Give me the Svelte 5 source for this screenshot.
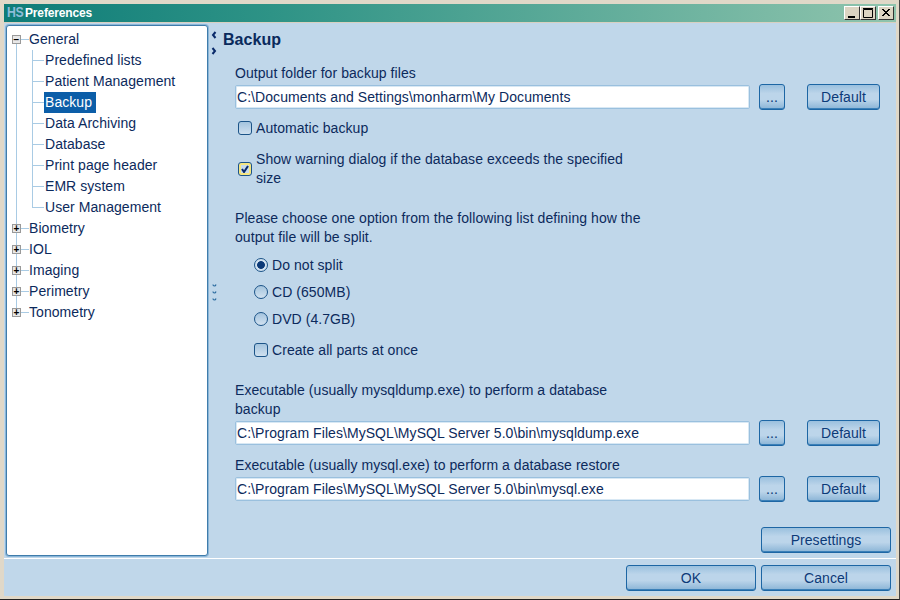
<script lang="ts">
	// 트리 데이터
	const general = [
		'Predefined lists',
		'Patient Management',
		'Backup',
		'Data Archiving',
		'Database',
		'Print page header',
		'EMR system',
		'User Management'
	];
	const closed = ['Biometry', 'IOL', 'Imaging', 'Perimetry', 'Tonometry'];

	let backupDir = 'C:\\Documents and Settings\\monharm\\My Documents';
	let dumpExe = 'C:\\Program Files\\MySQL\\MySQL Server 5.0\\bin\\mysqldump.exe';
	let restoreExe = 'C:\\Program Files\\MySQL\\MySQL Server 5.0\\bin\\mysql.exe';
	let split = 'none';
</script>

<div class="window">
	<header class="titlebar">
		<span class="logo"><span>HS</span></span>
		<span class="title">Preferences</span>
		<div class="controls">
			<button class="ctl" aria-label="Minimize">
				<svg width="12" height="12" viewBox="0 0 12 12"><rect x="2" y="9" width="7" height="2" fill="#000" /></svg>
			</button>
			<button class="ctl" aria-label="Maximize">
				<svg width="12" height="12" viewBox="0 0 12 12"><path d="M1.5 2.5h9v8h-9z M1 1.5h10" fill="none" stroke="#000" /></svg>
			</button>
			<button class="ctl close" aria-label="Close">
				<svg width="12" height="12" viewBox="0 0 12 12"><path d="M2 2l7 7M3 2l7 7M9 2l-7 7M10 2l-7 7" stroke="#000" fill="none" /></svg>
			</button>
		</div>
	</header>

	<div class="main">
		<nav class="tree">
			<div class="node root open">
				<span class="expander">−</span>General
			</div>
			{#each general as item, i}
				<div class="node child" class:last={i === general.length - 1}>
					<span class:selected={item === 'Backup'}>{item}</span>
				</div>
			{/each}
			{#each closed as item, i}
				<div class="node root" class:lastroot={i === closed.length - 1}>
					<span class="expander">+</span>{item}
				</div>
			{/each}
		</nav>

		<div class="splitter">
			<div class="arrows">
				<svg width="6" height="8" viewBox="0 0 6 8"><path d="M4.5 1L2 4L4.5 7" fill="none" stroke="#0a2a6a" stroke-width="2" /></svg>
				<svg width="6" height="8" viewBox="0 0 6 8"><path d="M1.5 1L4 4L1.5 7" fill="none" stroke="#0a2a6a" stroke-width="2" /></svg>
			</div>
			<div class="grip">
				{#each [0, 1, 2] as g (g)}
					<svg width="5" height="4" viewBox="0 0 5 4"><path d="M1 1.5C1 3.5 3.5 3.5 4 1.5" fill="none" stroke="#2c6ca0" stroke-width="1.2" /></svg>
				{/each}
			</div>
		</div>

		<section class="content">
			<h2>Backup</h2>
			<div class="form">
				<p class="label first">Output folder for backup files</p>
				<div class="pathrow">
					<input bind:value={backupDir} />
					<button class="btn dots">...</button>
					<button class="btn def">Default</button>
				</div>

				<label class="check auto">
					<span class="box"></span>
					<span>Automatic backup</span>
				</label>
				<label class="check warn">
					<span class="box checked">
						<svg width="8" height="8" viewBox="0 0 8 8"><path d="M1 4l2 3 4-6" fill="none" stroke="#0a2a6a" stroke-width="2" /></svg>
					</span>
					<span class="warntext">Show warning dialog if the database exceeds the specified size</span>
				</label>

				<p class="para">Please choose one option from the following list defining how the output file will be split.</p>

				<div class="options">
					<label class="radio"><input type="radio" bind:group={split} value="none" /><span class="dot"></span>Do not split</label>
					<label class="radio"><input type="radio" bind:group={split} value="cd" /><span class="dot"></span>CD (650MB)</label>
					<label class="radio"><input type="radio" bind:group={split} value="dvd" /><span class="dot"></span>DVD (4.7GB)</label>
					<label class="check parts"><span class="box"></span><span>Create all parts at once</span></label>
				</div>

				<p class="para exe">Executable (usually mysqldump.exe) to perform a database backup</p>
				<div class="pathrow">
					<input bind:value={dumpExe} />
					<button class="btn dots">...</button>
					<button class="btn def">Default</button>
				</div>

				<p class="label restore">Executable (usually mysql.exe) to perform a database restore</p>
				<div class="pathrow">
					<input bind:value={restoreExe} />
					<button class="btn dots">...</button>
					<button class="btn def">Default</button>
				</div>
			</div>
			<div class="presets">
				<button class="btn wide">Presettings</button>
			</div>
		</section>
	</div>

	<footer class="footer">
		<button class="btn wide">OK</button>
		<button class="btn wide">Cancel</button>
	</footer>
</div>

<style>
	:global(body) {
		margin: 0;
		background: #000;
	}

	/* Window frame */
	.window {
		box-sizing: border-box;
		width: 900px;
		height: 600px;
		display: flex;
		flex-direction: column;
		padding: 4px 3px 3px 4px;
		background: #e0d8c8;
		border-right: 1px solid #444;
		border-bottom: 1px solid #222;
		font-family: 'Liberation Sans', Arial, sans-serif;
		font-size: 14px;
		letter-spacing: 0.06px;
		color: #0c2a5c;
		overflow: hidden;
	}

	/* Title bar */
	.titlebar {
		flex: none;
		height: 18px;
		display: flex;
		align-items: center;
		padding: 0 2px 0 3px;
		background: linear-gradient(90deg, #0e7c78, #2e9386 30%, #8fc4ad);
		color: #fff;
		border-bottom: 1px solid #d8d0c0;
	}

	.logo {
		width: 16px;
		height: 18px;
		margin-right: 2px;
		font-size: 15px;
		line-height: 15px;
		font-weight: 700;
		letter-spacing: -0.5px;
		color: #8dbcd8;
	}

	.logo span {
		display: inline-block;
		transform: scaleX(0.82);
		transform-origin: left center;
	}

	.title {
		flex: 1;
		font-size: 12px;
		font-weight: 700;
		letter-spacing: -0.15px;
	}

	.controls {
		display: flex;
	}

	.ctl {
		box-sizing: border-box;
		width: 16px;
		height: 14px;
		padding: 0;
		display: grid;
		place-items: center;
		background: #dcd4c2;
		border: 1px solid;
		border-color: #fff #333 #333 #fff;
	}

	.close {
		margin-left: 2px;
	}

	/* Main area */
	.main {
		flex: 1;
		min-height: 0;
		display: flex;
		background: #c0d7ea;
		padding-top: 2px;
	}

	/* Tree */
	.tree {
		box-sizing: border-box;
		flex: none;
		width: 202px;
		height: 531px;
		margin-left: 2px;
		padding: 3px 0 0 0;
		background: #fff;
		border: 1px solid #3f7cab;
		border-radius: 3px;
		box-shadow: 0 0 0 1px #8ab6d8;
	}

	.node {
		position: relative;
		height: 21px;
		line-height: 21px;
		white-space: nowrap;
	}

	.root {
		padding-left: 22px;
	}

	.child {
		padding-left: 38px;
	}

	/* 트리 연결선 */
	.root::before,
	.child::before {
		content: '';
		position: absolute;
		left: 9px;
		top: 0;
		bottom: 0;
		border-left: 1px solid #a9cbe4;
	}

	.open::before {
		top: 10px;
	}

	.lastroot::before {
		bottom: 10px;
	}

	.root::after,
	.child::after {
		content: '';
		position: absolute;
		top: 10px;
		height: 1px;
		background: #a9cbe4;
	}

	.root::after {
		left: 14px;
		width: 8px;
	}

	.child::after {
		left: 26px;
		width: 11px;
	}

	.child > span {
		position: relative;
		display: inline-block;
		height: 21px;
		padding: 0 4px 0 1px;
		margin-left: -1px;
	}

	.child > span::before {
		content: '';
		position: absolute;
		left: -12px;
		top: 0;
		height: 21px;
		border-left: 1px solid #a9cbe4;
	}

	.child.last > span::before {
		height: 11px;
	}

	.selected {
		background: #0c5ea8;
		color: #fff;
	}

	.expander {
		position: absolute;
		z-index: 1;
		left: 5px;
		top: 6px;
		box-sizing: border-box;
		width: 9px;
		height: 9px;
		background: #e8e8e8;
		border: 1px solid #999;
		color: #000;
		font-size: 10px;
		font-weight: 700;
		line-height: 7px;
		text-align: center;
	}

	/* Splitter */
	.splitter {
		flex: none;
		width: 14px;
		margin-left: 1px;
		position: relative;
	}

	.arrows {
		display: flex;
		flex-direction: column;
		gap: 8px;
		padding: 6px 5px 0 0;
		align-items: center;
	}

	.arrows svg {
		display: block;
	}

	.grip {
		position: absolute;
		left: 3px;
		top: 258px;
		display: flex;
		flex-direction: column;
		gap: 3px;
	}

	.grip svg {
		display: block;
	}

	/* Content */
	.content {
		flex: 1;
		min-width: 0;
		display: flex;
		flex-direction: column;
	}

	h2 {
		margin: 0;
		padding-top: 4px;
		height: 24px;
		line-height: 22px;
		font-size: 16px;
		font-weight: 700;
		color: #0a2a5c;
	}

	.form {
		flex: 1;
		padding: 11px 0 0 12px;
	}

	p {
		margin: 0;
		line-height: 19px;
	}

	.label {
		height: 19px;
	}

	.first {
		margin-bottom: 1px;
	}

	.pathrow {
		display: flex;
		align-items: center;
		height: 26px;
	}

	.pathrow input {
		box-sizing: border-box;
		width: 515px;
		height: 24px;
		padding: 0 1px;
		background: #fff;
		border: 1px solid #9ac0de;
		border-radius: 2px;
		box-shadow: inset 0 0 0 1px #d8e8f4;
		font: inherit;
		letter-spacing: inherit;
		color: #0c2a5c;
		outline: none;
	}

	.btn {
		box-sizing: border-box;
		height: 26px;
		padding: 0;
		border: 1px solid #1d66a4;
		border-radius: 3px;
		background: linear-gradient(180deg, #9ac0de 0%, #bcd5ea 35%, #bcd5ea 60%, #8ab4d6 100%);
		box-shadow: inset 0 -1px 0 #3b80b8;
		font: inherit;
		letter-spacing: inherit;
		color: #0c3a78;
	}

	.dots {
		width: 26px;
		margin-left: 9px;
	}

	.def {
		width: 73px;
		margin-left: 22px;
	}

	.wide {
		width: 130px;
	}

	.check,
	.radio {
		display: flex;
		align-items: center;
	}

	.box {
		box-sizing: border-box;
		flex: none;
		width: 14px;
		height: 14px;
		display: grid;
		place-items: center;
		border: 1px solid #1c5488;
		border-radius: 3px;
		background: linear-gradient(180deg, #a4c4de, #cfe0ef);
	}

	.checked {
		background: #c8dcec;
		box-shadow: inset 0 0 0 2px #f6e680;
	}

	.auto {
		margin: 8px 0 0 3px;
		height: 20px;
		gap: 4px;
	}

	.warn {
		margin: 12px 0 0 3px;
		gap: 4px;
	}

	.warntext {
		width: 370px;
		line-height: 19px;
	}

	.para {
		width: 420px;
	}

	.warn + .para {
		margin-top: 21px;
	}

	.options {
		padding: 4px 0 0 19px;
	}

	.radio {
		height: 27px;
		gap: 4px;
	}

	.radio input {
		position: absolute;
		opacity: 0;
		width: 0;
		height: 0;
	}

	.dot {
		box-sizing: border-box;
		width: 14px;
		height: 14px;
		border: 1px solid #1c5488;
		border-radius: 50%;
		background: linear-gradient(180deg, #a4c4de, #d2e2f0);
	}

	.radio input:checked + .dot {
		background: radial-gradient(circle, #0c3a78 0 3.5px, #d2e2f0 4.3px);
	}

	.parts {
		margin-top: 4px;
		gap: 4px;
		height: 27px;
	}

	.exe {
		margin-top: 18px;
		width: 400px;
		margin-bottom: 1px;
	}

	.restore {
		margin-top: 10px;
		margin-bottom: 1px;
	}

	.presets {
		display: flex;
		justify-content: flex-end;
		padding: 0 5px 5px 0;
	}

	/* Footer */
	.footer {
		flex: none;
		height: 38px;
		box-sizing: border-box;
		display: flex;
		justify-content: flex-end;
		gap: 5px;
		padding: 6px 5px 0 0;
		background: #c0d7ea;
		border-top: 1px solid #fff;
	}
</style>
